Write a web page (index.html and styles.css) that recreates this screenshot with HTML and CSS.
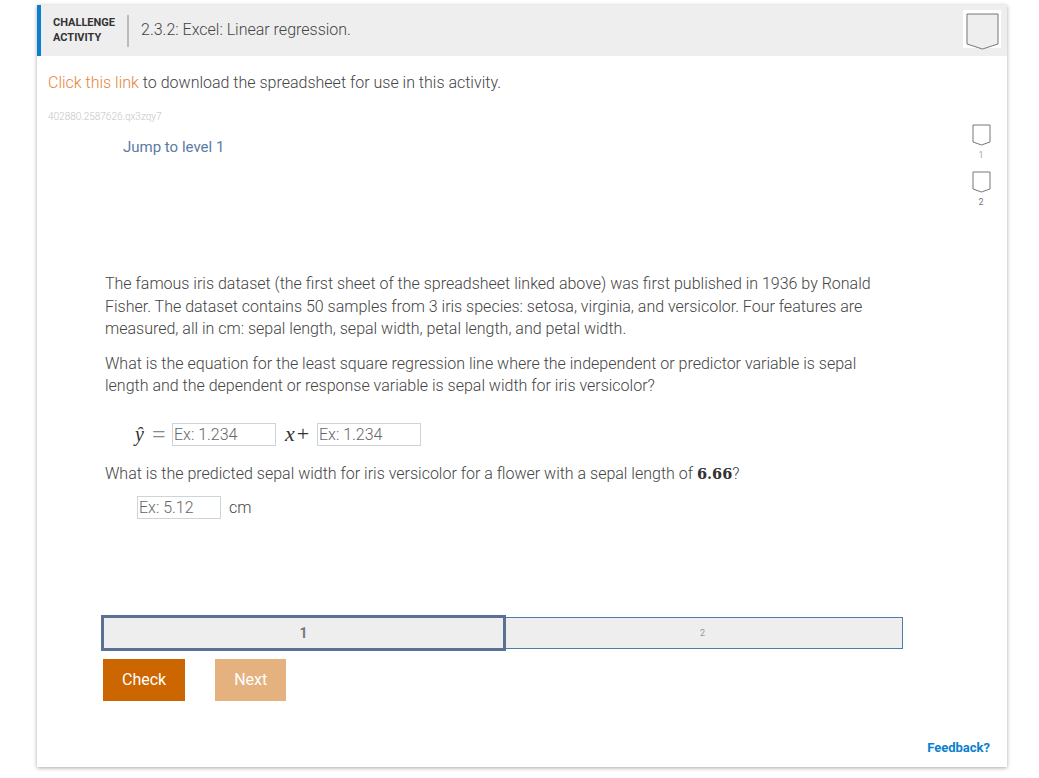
FILE: index.html
```html
<html lang="en">
<head>
    <meta charset="UTF-8">
    <meta name="viewport" content="width=device-width, initial-scale=1.0">
    <title>Challenge activity</title>
    <link rel="stylesheet" href="styles.css">
</head>
<body>
    <div class="activity">
        <div class="activity-header">
            <div class="activity-label">CHALLENGE<br>ACTIVITY</div>
            <div class="activity-title">2.3.2: Excel: Linear regression.</div>
            <div class="header-badge">
                <svg width="33" height="37" viewBox="0 0 33 37">
                    <path d="M1 1H32V31L16.5 36L1 31Z" fill="#eeeeee" stroke="#777777" stroke-width="1"/>
                </svg>
            </div>
        </div>

        <div class="activity-body">
            <p class="intro"><a href="#" class="link">Click this link</a> to download the spreadsheet for use in this activity.</p>
            <div class="activity-id">402880.2587626.qx3zqy7</div>

            <div class="level-row">
                <div class="level-main">
                    <a href="#" class="jump">Jump to level 1</a>

                    <div class="question">
                        <p class="para first">The famous iris dataset (the first sheet of the spreadsheet linked above) was first published in 1936 by Ronald Fisher. The dataset contains 50 samples from 3 iris species: setosa, virginia, and versicolor. Four features are measured, all in cm: sepal length, sepal width, petal length, and petal width.</p>
                        <p class="para">What is the equation for the least square regression line where the independent or predictor variable is sepal length and the dependent or response variable is sepal width for iris versicolor?</p>

                        <div class="equation">
                            <span class="math yhat"><i>ŷ</i></span>
                            <span class="math equals">=</span>
                            <input class="answer" type="text" placeholder="Ex: 1.234">
                            <span class="math term"><i>x</i>+</span>
                            <input class="answer" type="text" placeholder="Ex: 1.234">
                        </div>

                        <p class="para predict">What is the predicted sepal width for iris versicolor for a flower with a sepal length of <b class="bold-num">6.66</b>?</p>

                        <div class="answer-row">
                            <input class="answer short" type="text" placeholder="Ex: 5.12">
                            <span class="unit">cm</span>
                        </div>
                    </div>
                </div>

                <div class="level-badges">
                    <div class="small-badge">
                        <svg width="19" height="22" viewBox="0 0 19 22">
                            <path d="M1 1H18V18L9.5 21L1 18Z" fill="#ffffff" stroke="#777777" stroke-width="1"/>
                        </svg>
                        <span class="faint">1</span>
                    </div>
                    <div class="small-badge">
                        <svg width="19" height="22" viewBox="0 0 19 22">
                            <path d="M1 1H18V18L9.5 21L1 18Z" fill="#ffffff" stroke="#777777" stroke-width="1"/>
                        </svg>
                        <span>2</span>
                    </div>
                </div>
            </div>

            <div class="levels">
                <div class="level current">1</div>
                <div class="level">2</div>
            </div>

            <div class="controls">
                <button class="btn">Check</button>
                <button class="btn disabled">Next</button>
            </div>

            <div class="feedback-row">
                <a href="#" class="feedback">Feedback?</a>
            </div>
        </div>
    </div>
</body>
</html>
```

FILE: styles.css
```css
body {
    font-family: Roboto, Arial, sans-serif;
    font-weight: 300;
    font-size: 16px;
    color: #444;
    background-color: white;
    margin: 0;
    padding: 5px 32px 11px 37px;
    height: 778px;
    box-sizing: border-box;
    overflow: hidden;
}

.activity {
    height: 762px;
    display: flex;
    flex-direction: column;
    background-color: white;
    box-shadow: 0 1px 4px rgba(0, 0, 0, 0.35);
}

.activity-header {
    display: flex;
    align-items: center;
    height: 51px;
    box-sizing: border-box;
    padding: 0 6px 0 12px;
    background-color: #eeeeee;
    border-left: 4px solid #0a7fd0;
}

.activity-label {
    font-size: 11px;
    font-weight: 700;
    line-height: 15px;
    color: #333;
    padding-right: 12px;
    padding-bottom: 2px;
    height: 32px;
    box-sizing: border-box;
    display: flex;
    align-items: center;
    border-right: 2px solid #bbbbbb;
}

.activity-title {
    flex: 1;
    margin-left: 12px;
    padding-bottom: 2px;
}

.header-badge {
    align-self: flex-start;
    width: 38px;
    height: 38px;
    margin-top: 5px;
    box-sizing: border-box;
    padding: 3px 0 0 3px;
    background-color: white;
}

.activity-body {
    flex: 1;
    display: flex;
    flex-direction: column;
    padding: 0 15px 0 11px;
}

.intro {
    margin: 17px 0 0 0;
    line-height: 19px;
}

.link {
    color: #e8833a;
    text-decoration: none;
}

.activity-id {
    font-size: 10px;
    line-height: 11px;
    color: #c4c4c4;
    margin-top: 19px;
}

.level-row {
    display: flex;
    height: 489px;
    margin-top: 6px;
}

.level-main {
    flex: 1;
}

.jump {
    display: block;
    margin: 10px 0 0 75px;
    font-size: 15px;
    font-weight: 400;
    line-height: 18px;
    color: #5a7ba3;
    text-decoration: none;
}

.question {
    margin: 117.2px 0 0 57px;
    width: 775px;
}

.para {
    margin: 12.6px 0 0 0;
    line-height: 22.4px;
}

.para.first {
    margin-top: 0;
}

.equation {
    display: flex;
    align-items: center;
    height: 24px;
    margin: 24.2px 0 0 30px;
}

.math {
    font-family: "Liberation Serif", "DejaVu Serif", serif;
    font-size: 20px;
    color: #333;
}

.bold-num {
    font-family: "DejaVu Serif", serif;
    font-size: 14.5px;
    font-weight: 700;
    line-height: 0;
    color: #333;
}

.yhat {
    width: 17px;
}

.equals {
    width: 20px;
    font-size: 24px;
    color: #888;
}

.term {
    margin-left: 9px;
    width: 32px;
    font-size: 22px;
    letter-spacing: 2px;
}

.answer {
    width: 104px;
    height: 23px;
    box-sizing: border-box;
    padding: 0 1px;
    border: 1px solid #ccd5da;
    font-family: Roboto, Arial, sans-serif;
    font-weight: 300;
    font-size: 16px;
}

.answer::placeholder {
    color: #666;
    opacity: 1;
}

.answer.short {
    width: 84px;
}

.predict {
    margin-top: 17px;
}

.answer-row {
    display: flex;
    align-items: center;
    margin: 11px 0 0 32px;
}

.unit {
    margin-left: 8px;
}

.level-badges {
    width: 22px;
    display: flex;
    flex-direction: column;
    align-items: center;
    margin-top: -4px;
}

.small-badge {
    height: 47px;
    display: flex;
    flex-direction: column;
    align-items: center;
    font-size: 9px;
    font-weight: 400;
    color: #777;
}

.small-badge span {
    line-height: 14px;
    margin-top: 2px;
}

.small-badge .faint {
    color: #aaa;
}

.levels {
    display: flex;
    width: 800px;
    height: 32px;
    margin-left: 55px;
}

.level {
    flex: 1;
    display: flex;
    justify-content: center;
    align-items: center;
    padding-right: 3px;
    background-color: #eeeeee;
    border: 1px solid #4f7ba8;
    font-size: 9px;
    font-weight: 400;
    color: #999;
}

.level.current {
    flex: none;
    width: 405px;
    height: 36px;
    box-sizing: border-box;
    margin: -2px -1px 0 -2px;
    padding-right: 0;
    border: 3px solid #5a7193;
    font-size: 14px;
    font-weight: 700;
    color: #777;
    position: relative;
}

.controls {
    display: flex;
    gap: 30px;
    margin: 10px 0 0 55px;
}

.btn {
    height: 42px;
    padding: 0 19px 2px;
    border: none;
    background-color: #cc6600;
    color: white;
    font-family: Roboto, Arial, sans-serif;
    font-size: 16px;
    font-weight: 400;
}

.btn.disabled {
    opacity: 0.5;
}

.feedback-row {
    display: flex;
    justify-content: flex-end;
    padding-right: 2px;
    margin-top: 39px;
}

.feedback {
    font-size: 13px;
    font-weight: 700;
    line-height: 15px;
    color: #0a7fd0;
    text-decoration: none;
}
```
